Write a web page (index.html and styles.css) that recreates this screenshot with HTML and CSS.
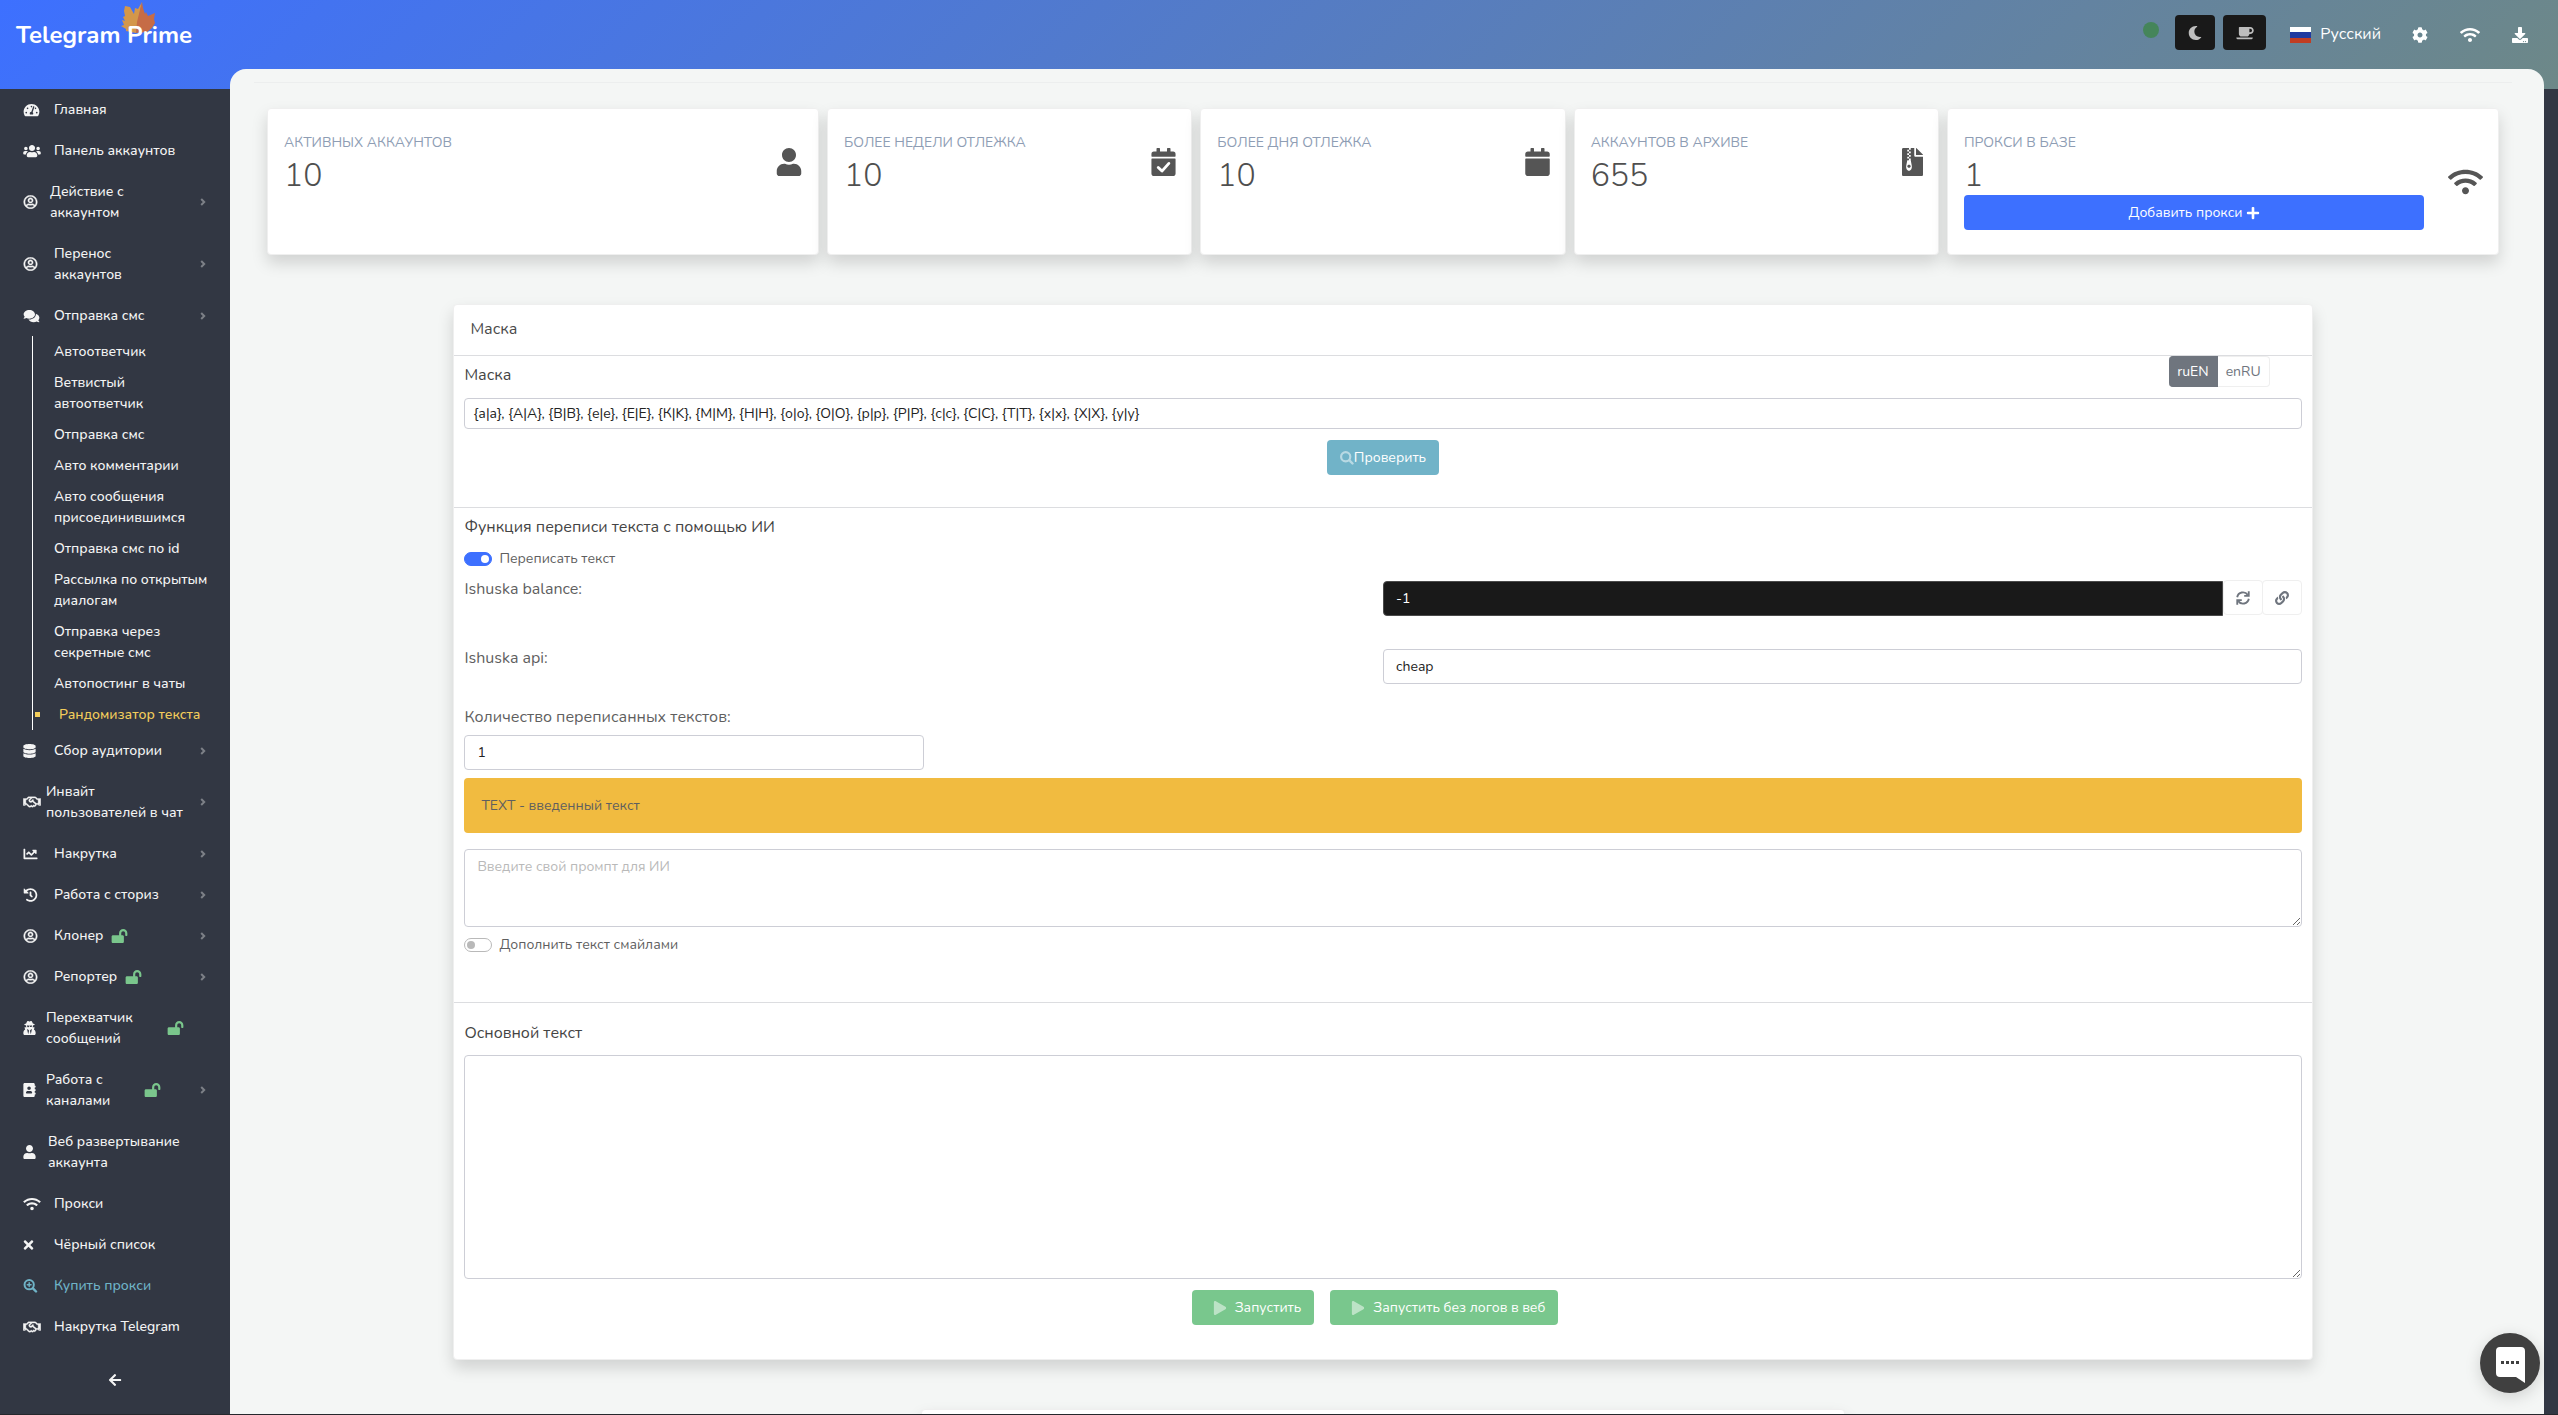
FILE: index.html
```html
<!DOCTYPE html>
<html lang="ru">
<head>
<meta charset="utf-8">
<meta name="viewport" content="width=device-width, initial-scale=1">
<title>Telegram Prime</title>
<link rel="stylesheet" href="styles.css">
</head>
<body>
<svg class="sprite" aria-hidden="true">
  <symbol id="i-dash" viewBox="0 0 576 512"><path d="M288 32C128.94 32 0 160.94 0 320c0 52.8 14.25 102.26 39.06 144.8 5.61 9.62 16.3 15.2 27.44 15.2h443c11.14 0 21.83-5.58 27.44-15.2C561.75 422.26 576 372.8 576 320c0-159.06-128.94-288-288-288zm0 64c14.71 0 26.58 10.13 30.32 23.65-1.11 2.26-2.64 4.23-3.45 6.67l-9.22 27.67c-5.13 3.49-10.97 6.01-17.64 6.01-17.67 0-32-14.33-32-32S270.33 96 288 96zM96 384c-17.67 0-32-14.33-32-32s14.33-32 32-32 32 14.33 32 32-14.33 32-32 32zm48-160c-17.67 0-32-14.33-32-32s14.33-32 32-32 32 14.33 32 32-14.33 32-32 32zm246.77-72.41l-61.33 184C343.13 347.33 352 364.54 352 384c0 11.72-3.38 22.55-8.88 32H232.88c-5.5-9.45-8.88-20.28-8.88-32 0-33.94 26.5-61.43 59.9-63.59l61.34-184.01c4.17-12.56 17.73-19.45 30.36-15.17 12.57 4.19 19.35 17.79 15.17 30.36zm14.66 57.2l15.52-46.55c3.47-1.29 7.13-2.23 11.05-2.23 17.67 0 32 14.33 32 32s-14.33 32-32 32c-11.38-.01-20.89-6.28-26.57-15.22zM480 384c-17.67 0-32-14.33-32-32s14.33-32 32-32 32 14.33 32 32-14.33 32-32 32z"/></symbol>
  <symbol id="i-users" viewBox="0 0 640 512"><path d="M96 224c35.3 0 64-28.7 64-64s-28.7-64-64-64-64 28.7-64 64 28.7 64 64 64zm448 0c35.3 0 64-28.7 64-64s-28.7-64-64-64-64 28.7-64 64 28.7 64 64 64zm32 32h-64c-17.6 0-33.5 7.1-45.1 18.6 40.3 22.1 68.9 62 75.1 109.4h66c17.7 0 32-14.3 32-32v-32c0-35.3-28.7-64-64-64zm-256 0c61.9 0 112-50.1 112-112S381.9 32 320 32 208 82.1 208 144s50.1 112 112 112zm76.8 32h-8.3c-20.8 10-43.9 16-68.5 16s-47.6-6-68.5-16h-8.3C179.6 288 128 339.6 128 403.2V432c0 26.5 21.5 48 48 48h288c26.5 0 48-21.5 48-48v-28.8c0-63.6-51.6-115.2-115.2-115.2zm-223.7-13.4C161.5 263.1 145.6 256 128 256H64c-35.3 0-64 28.7-64 64v32c0 17.7 14.3 32 32 32h65.9c6.3-47.4 34.9-87.3 75.2-109.4z"/></symbol>
  <symbol id="i-circle-user" viewBox="0 0 496 512"><path stroke="currentColor" stroke-width="14" d="M248 104c-53 0-96 43-96 96s43 96 96 96 96-43 96-96-43-96-96-96zm0 144c-26.5 0-48-21.5-48-48s21.5-48 48-48 48 21.5 48 48-21.5 48-48 48zm0-240C111 8 0 119 0 256s111 248 248 248 248-111 248-248S385 8 248 8zm0 448c-49.7 0-95.1-18.3-130.1-48.4 14.9-23 40.4-38.6 69.6-39.5 20.8 6.4 40.6 9.6 60.5 9.6s39.7-3.1 60.5-9.6c29.2 1 54.7 16.5 69.6 39.5-35 30.1-80.4 48.4-130.1 48.4zm162.7-84.1c-24.4-31.4-62.1-51.9-105.1-51.9-10.2 0-26 9.6-57.6 9.6-31.5 0-47.4-9.6-57.6-9.6-42.9 0-80.6 20.5-105.1 51.9C61.9 339.2 48 299.2 48 256c0-110.3 89.7-200 200-200s200 89.7 200 200c0 43.2-13.9 83.2-37.3 115.9z"/></symbol>
  <symbol id="i-comments" viewBox="0 0 576 512"><path d="M416 192c0-88.4-93.1-160-208-160S0 103.6 0 192c0 34.3 14.1 65.9 38 92-13.4 30.2-35.5 54.2-35.8 54.5-2.2 2.3-2.8 5.7-1.5 8.7S4.8 352 8 352c36.6 0 66.9-12.3 88.7-25 32.2 15.7 70.3 25 111.3 25 114.9 0 208-71.6 208-160zm122 220c23.9-26 38-57.7 38-92 0-66.9-53.5-124.2-129.3-148.1.9 6.6 1.3 13.3 1.3 20.1 0 105.9-107.7 192-240 192-10.8 0-21.3-.8-31.7-1.9C207.8 439.6 281.8 480 368 480c41 0 79.1-9.2 111.3-25 21.8 12.7 52.1 25 88.7 25 3.2 0 6.1-1.9 7.3-4.8 1.3-2.9.7-6.3-1.5-8.7-.3-.3-22.4-24.2-35.8-54.5z"/></symbol>
  <symbol id="i-chevron" viewBox="0 0 6 8"><path fill="none" stroke="currentColor" stroke-width="2" d="M1.2 1L4.2 4L1.2 7"/></symbol>
  <symbol id="i-database" viewBox="0 0 448 512"><path d="M448 73.143v45.714C448 159.143 347.667 192 224 192S0 159.143 0 118.857V73.143C0 32.857 100.333 0 224 0s224 32.857 224 73.143zM448 176v102.857C448 319.143 347.667 352 224 352S0 319.143 0 278.857V176c48.125 33.143 136.208 48.572 224 48.572S399.874 209.143 448 176zm0 160v102.857C448 479.143 347.667 512 224 512S0 479.143 0 438.857V336c48.125 33.143 136.208 48.572 224 48.572S399.874 369.143 448 336z"/></symbol>
  <symbol id="i-handshake" viewBox="0 0 640 512"><path stroke="currentColor" stroke-width="12" d="M519.2 127.9l-47.6-47.6A56.252 56.252 0 0 0 432 64H205.2c-14.8 0-29.1 5.9-39.6 16.3L118 127.9H0v255.7h64c17.6 0 31.8-14.2 31.9-31.7h9.1l84.6 76.4c30.9 25.1 73.8 25.7 105.6 3.8 12.5 10.8 26 15.9 41.1 15.9 18.2 0 35.3-7.4 48.8-24 22.1 8.7 48.2 2.6 64-16.8l26.2-32.3c5.6-6.9 9.1-14.8 10.9-23h57.9c.1 17.5 14.4 31.7 31.9 31.7h64V127.9H519.2zM48 351.6c-8.8 0-16-7.2-16-16s7.2-16 16-16 16 7.2 16 16c0 8.9-7.2 16-16 16zm390-6.9l-26.1 32.2c-2.8 3.4-7.8 4-11.3 1.2l-23.9-19.4-30 36.5c-6 7.3-15 4.8-18 2.4l-36.8-31.5-15.6 19.2c-13.9 17.1-39.2 19.7-55.3 6.6l-97.3-88H96V175.8h41.9l61.7-61.6c2-.8 3.7-1.5 5.7-2.3H262l-38.7 35.5c-29.4 26.9-31.1 72.3-4.4 101.3 14.8 16.2 61.2 41.2 101.5 4.4l8.2-7.5 108.2 87.8c3.4 2.8 3.9 7.9 1.2 11.3zm106-40.8h-69.2c-2.3-2.8-4.9-5.4-7.7-7.7l-102.7-83.4 12.5-11.4c6.5-6 7-16.1 1-22.6L367 167.1c-6-6.5-16.1-6.9-22.6-1l-55.2 50.6c-9.5 8.7-25.7 9.4-34.6 0-9.3-9.9-8.5-25.1 1.2-33.9l65.6-60.2c7.4-6.8 17-10.5 27-10.5l83.7-.2c2.1 0 4.1.8 5.5 2.3l61.7 61.6H544v128zm48 47.7c-8.8 0-16-7.2-16-16s7.2-16 16-16 16 7.2 16 16c0 8.9-7.2 16-16 16z"/></symbol>
  <symbol id="i-chart" viewBox="0 0 512 512"><path d="M496 384H64V80c0-8.84-7.16-16-16-16H16C7.16 64 0 71.16 0 80v336c0 17.67 14.33 32 32 32h464c8.84 0 16-7.16 16-16v-32c0-8.84-7.16-16-16-16zM464 96H345.94c-21.38 0-32.09 25.85-16.97 40.97l32.4 32.4L288 242.75l-73.37-73.37c-12.5-12.5-32.76-12.5-45.25 0l-68.69 68.69c-6.25 6.25-6.25 16.38 0 22.63l22.62 22.62c6.25 6.25 16.38 6.25 22.63 0L192 237.25l73.37 73.37c12.5 12.5 32.76 12.5 45.25 0l96-96 32.4 32.4c15.12 15.12 40.97 4.41 40.97-16.97V112c.01-8.84-7.15-16-15.99-16z"/></symbol>
  <symbol id="i-history" viewBox="0 0 512 512"><path d="M504 255.531c.253 136.64-111.18 248.372-247.82 248.468-59.015.042-113.223-20.53-155.822-54.911-11.077-8.94-11.905-25.541-1.839-35.607l11.267-11.267c8.609-8.609 22.353-9.551 31.891-1.984C173.062 425.135 212.781 440 256 440c101.705 0 184-82.311 184-184 0-101.705-82.311-184-184-184-48.814 0-93.149 18.969-126.068 49.932l50.754 50.754c10.08 10.08 2.941 27.314-11.313 27.314H24c-8.837 0-16-7.163-16-16V38.627c0-14.254 17.234-21.393 27.314-11.314l49.372 49.372C129.209 34.136 189.552 8 256 8c136.81 0 247.747 110.78 248 247.531zm-180.912 78.784l9.823-12.63c8.138-10.463 6.253-25.542-4.21-33.679L288 256.349V152c0-13.255-10.745-24-24-24h-16c-13.255 0-24 10.745-24 24v135.651l65.409 50.874c10.463 8.137 25.541 6.253 33.679-4.21z"/></symbol>
  <symbol id="i-unlock" viewBox="0 0 576 512"><path d="M423.5 0C339.5.3 272 69.5 272 153.5V224H48c-26.5 0-48 21.5-48 48v192c0 26.5 21.5 48 48 48h352c26.5 0 48-21.5 48-48V272c0-26.5-21.5-48-48-48h-48v-71.1c0-39.6 31.7-72.5 71.3-72.9 40-.4 72.7 32.1 72.7 72v80c0 13.3 10.7 24 24 24h32c13.3 0 24-10.7 24-24v-80C576 68 507.5-.3 423.5 0z"/></symbol>
  <symbol id="i-secret" viewBox="0 0 448 512"><path d="M383.9 308.3l23.9-62.6c4-10.5-3.7-21.7-15-21.7h-58.5c11-18.9 17.8-40.6 17.8-64v-.3c39.2-7.8 64-19.1 64-31.7 0-13.3-27.3-25.1-70.1-33-9.2-32.8-27-65.8-40.6-82.8-9.5-11.9-25.9-15.6-39.5-8.8l-27.6 13.8c-9 4.5-19.6 4.5-28.6 0L182.1 3.4c-13.6-6.8-30-3.1-39.5 8.8-13.5 17-31.4 50-40.6 82.8-42.7 7.9-70 19.7-70 33 0 12.6 24.8 23.9 64 31.7v.3c0 23.4 6.8 45.1 17.8 64H56.3c-11.5 0-19.2 11.7-14.7 22.3l25.8 60.2C27.3 329.8 0 372.7 0 422.4v44.8C0 491.9 20.1 512 44.8 512h358.4c24.7 0 44.8-20.1 44.8-44.8v-44.8c0-48.4-25.8-90.4-64.1-114.1zM176 480l-41.6-192 49.6 32 24 40-32 120zm96 0l-32-120 24-40 49.6-32L272 480zm41.7-298.5c-3.9 11.9-7 24.6-16.5 33.4-10.1 9.3-48 22.4-64-25-2.8-8.4-15.4-8.4-18.3 0-17 50.2-56 32.4-64 25-9.5-8.8-12.7-21.5-16.5-33.4-.8-2.5-6.3-5.7-6.3-5.8v-10.8c28.3 3.6 61 5.8 96 5.8s67.7-2.1 96-5.8v10.8c-.1.1-5.6 3.2-6.4 5.8z"/></symbol>
  <symbol id="i-book" viewBox="0 0 448 512"><path d="M436 160c6.6 0 12-5.4 12-12v-40c0-6.6-5.4-12-12-12h-20V48c0-26.5-21.5-48-48-48H48C21.5 0 0 21.5 0 48v416c0 26.5 21.5 48 48 48h320c26.5 0 48-21.5 48-48v-48h20c6.6 0 12-5.4 12-12v-40c0-6.6-5.4-12-12-12h-20v-64h20c6.6 0 12-5.4 12-12v-40c0-6.6-5.4-12-12-12h-20v-64h20zm-228-32c35.3 0 64 28.7 64 64s-28.7 64-64 64-64-28.7-64-64 28.7-64 64-64zm112 236.8c0 10.6-10 19.2-22.4 19.2H118.4C106 384 96 375.4 96 364.8v-19.2c0-31.8 30.1-57.6 67.2-57.6h5c12.3 5.1 25.7 8 39.8 8s27.6-2.9 39.8-8h5c37.1 0 67.2 25.8 67.2 57.6v19.2z"/></symbol>
  <symbol id="i-user" viewBox="0 0 448 512"><path d="M224 256c70.7 0 128-57.3 128-128S294.7 0 224 0 96 57.3 96 128s57.3 128 128 128zm89.6 32h-16.7c-22.2 10.2-46.9 16-72.9 16s-50.6-5.8-72.9-16h-16.7C60.2 288 0 348.2 0 422.4V464c0 26.5 21.5 48 48 48h352c26.5 0 48-21.5 48-48v-41.6c0-74.2-60.2-134.4-134.4-134.4z"/></symbol>
  <symbol id="i-wifi" viewBox="0 0 640 512"><path d="M634.91 154.88C457.74-8.99 182.19-8.93 5.09 154.88c-6.66 6.16-6.79 16.59-.35 22.98l34.24 33.97c6.14 6.1 16.02 6.23 22.4.38 145.92-133.68 371.3-133.71 517.25 0 6.38 5.85 16.26 5.71 22.4-.38l34.24-33.97c6.43-6.39 6.3-16.82-.36-22.98zM320 352c-35.35 0-64 28.65-64 64s28.65 64 64 64 64-28.65 64-64-28.65-64-64-64zm202.67-83.59c-115.26-101.93-290.21-101.82-405.34 0-6.9 6.1-7.12 16.69-.57 23.15l34.44 33.99c6 5.92 15.66 6.32 22.05.8 83.95-72.57 209.74-72.41 293.49 0 6.39 5.52 16.05 5.13 22.05-.8l34.44-33.99c6.56-6.46 6.33-17.06-.56-23.15z"/></symbol>
  <symbol id="i-times" viewBox="0 0 352 512"><path d="M242.72 256l100.07-100.07c12.28-12.28 12.28-32.19 0-44.48l-22.24-22.24c-12.28-12.28-32.19-12.28-44.48 0L176 189.28 75.93 89.21c-12.28-12.28-32.19-12.28-44.48 0L9.21 111.45c-12.28 12.28-12.28 32.19 0 44.48L109.28 256 9.21 356.07c-12.28 12.28-12.28 32.19 0 44.48l22.24 22.24c12.28 12.28 32.2 12.28 44.48 0L176 322.72l100.07 100.07c12.28 12.28 32.2 12.28 44.48 0l22.24-22.24c12.28-12.28 12.28-32.19 0-44.48L242.72 256z"/></symbol>
  <symbol id="i-zoom-in" viewBox="0 0 512 512"><g fill="none" stroke="currentColor" stroke-width="72"><circle cx="208" cy="208" r="170"/><path stroke-width="90" stroke-linecap="round" d="M345 345l112 112"/><path stroke-width="52" stroke-linecap="round" d="M138 208h140M208 138v140"/></g></symbol>
  <symbol id="i-search" viewBox="0 0 512 512"><g fill="none" stroke="currentColor" stroke-width="80"><circle cx="208" cy="208" r="168"/><path stroke-width="90" stroke-linecap="round" d="M345 345l112 112"/></g></symbol>
  <symbol id="i-arrow-left" viewBox="0 0 448 512"><path d="M257.5 445.1l-22.2 22.2c-9.4 9.4-24.6 9.4-33.9 0L7 273c-9.4-9.4-9.4-24.6 0-33.9L201.4 44.7c9.4-9.4 24.6-9.4 33.9 0l22.2 22.2c9.5 9.5 9.3 25-.4 34.3L136.6 216H424c13.3 0 24 10.7 24 24v32c0 13.3-10.7 24-24 24H136.6l120.5 114.8c9.8 9.3 10 24.8.4 34.3z"/></symbol>
  <symbol id="i-cog" viewBox="0 0 512 512"><path d="M487.4 315.7l-42.6-24.6c4.3-23.2 4.3-47 0-70.2l42.6-24.6c4.9-2.8 7.1-8.6 5.5-14-11.1-35.6-30-67.8-54.7-94.6-3.8-4.1-10-5.1-14.8-2.3L380.8 110c-17.9-15.4-38.5-27.3-60.8-35.1V25.8c0-5.6-3.9-10.5-9.4-11.7-36.7-8.2-74.3-7.8-109.2 0-5.5 1.2-9.4 6.1-9.4 11.7V75c-22.2 7.9-42.8 19.8-60.8 35.1L88.7 85.5c-4.9-2.8-11-1.9-14.8 2.3-24.7 26.7-43.6 58.9-54.7 94.6-1.7 5.4.6 11.2 5.5 14L67.3 221c-4.3 23.2-4.3 47 0 70.2l-42.6 24.6c-4.9 2.8-7.1 8.6-5.5 14 11.1 35.6 30 67.8 54.7 94.6 3.8 4.1 10 5.1 14.8 2.3l42.6-24.6c17.9 15.4 38.5 27.3 60.8 35.1v49.2c0 5.6 3.9 10.5 9.4 11.7 36.7 8.2 74.3 7.8 109.2 0 5.5-1.2 9.4-6.1 9.4-11.7v-49.2c22.2-7.9 42.8-19.8 60.8-35.1l42.6 24.6c4.9 2.8 11 1.9 14.8-2.3 24.7-26.7 43.6-58.9 54.7-94.6 1.5-5.5-.7-11.3-5.6-14.1zM256 336c-44.1 0-80-35.9-80-80s35.9-80 80-80 80 35.9 80 80-35.9 80-80 80z"/></symbol>
  <symbol id="i-download" viewBox="0 0 512 512"><path d="M216 0h80c13.3 0 24 10.7 24 24v168h87.7c17.8 0 26.7 21.5 14.1 34.1L269.7 378.3c-7.5 7.5-19.8 7.5-27.3 0L90.1 226.1c-12.6-12.6-3.7-34.1 14.1-34.1H192V24c0-13.3 10.7-24 24-24zm296 376v112c0 13.3-10.7 24-24 24H24c-13.3 0-24-10.7-24-24V376c0-13.3 10.7-24 24-24h146.7l49 49c20.1 20.1 52.5 20.1 72.6 0l49-49H488c13.3 0 24 10.7 24 24zm-124 88c0-11-9-20-20-20s-20 9-20 20 9 20 20 20 20-9 20-20zm64 0c0-11-9-20-20-20s-20 9-20 20 9 20 20 20 20-9 20-20z"/></symbol>
  <symbol id="i-moon" viewBox="0 0 512 512"><path d="M283.211 512c78.962 0 151.079-35.925 198.857-94.792 7.068-8.708-.639-21.43-11.562-19.35-124.203 23.654-238.262-71.576-238.262-196.954 0-72.222 38.662-138.635 101.498-174.394 9.686-5.512 7.25-20.197-3.756-22.23A258.156 258.156 0 0 0 283.211 0c-141.309 0-256 114.511-256 256 0 141.309 114.511 256 256 256z"/></symbol>
  <symbol id="i-coffee" viewBox="0 0 640 512"><path d="M192 384h192c53 0 96-43 96-96h32c70.6 0 128-57.4 128-128S582.6 32 512 32H120c-13.3 0-24 10.7-24 24v232c0 53 43 96 96 96zM512 96c35.3 0 64 28.7 64 64s-28.7 64-64 64h-32V96h32zm47.7 384H48.3c-47.6 0-61-64-36-64h583.3c25 0 11.8 64-35.9 64z"/></symbol>
  <symbol id="i-plus" viewBox="0 0 448 512"><path d="M416 208H272V64c0-17.67-14.33-32-32-32h-32c-17.67 0-32 14.33-32 32v144H32c-17.67 0-32 14.33-32 32v32c0 17.67 14.33 32 32 32h144v144c0 17.67 14.33 32 32 32h32c17.67 0 32-14.33 32-32V304h144c17.67 0 32-14.33 32-32v-32c0-17.67-14.33-32-32-32z"/></symbol>
  <symbol id="i-calendar" viewBox="0 0 448 512"><path d="M12 192h424c6.6 0 12 5.4 12 12v260c0 26.5-21.5 48-48 48H48c-26.5 0-48-21.5-48-48V204c0-6.6 5.4-12 12-12zm436-44v-36c0-26.5-21.5-48-48-48h-48V12c0-6.6-5.4-12-12-12h-40c-6.6 0-12 5.4-12 12v52H160V12c0-6.6-5.4-12-12-12h-40c-6.6 0-12 5.4-12 12v52H48C21.5 64 0 85.5 0 112v36c0 6.6 5.4 12 12 12h424c6.6 0 12-5.4 12-12z"/></symbol>
  <symbol id="i-archive" viewBox="0 0 384 512"><path fill-rule="evenodd" d="M24 0h104v32h32V0h64v136c0 13 11 24 24 24h136v328c0 13-11 24-24 24H24c-13 0-24-11-24-24V24C0 11 11 0 24 0zM256 0q6 0 10 4l111 111q7 6 7 13H256zM96 32v32h32V32zM128 64v32h32V64zM96 96v32h32V96zM128 128v32h32v-32zM96 160v32h32v-32zM128 192v32H97l-19 96c-10 50 14 96 50 96s60-46 50-96l-18-96v-32zM128 304c18 0 32 12 32 28s-14 28-32 28-32-12-32-28 14-28 32-28z"/></symbol>
  <symbol id="i-sync" viewBox="0 0 512 512"><g fill="none" stroke="currentColor" stroke-width="68"><path d="M44 228A214 214 0 0 1 430 142M468 284A214 214 0 0 1 82 370"/><path d="M466 12v166H300M46 500V334h166"/></g></symbol>
  <symbol id="i-link" viewBox="0 0 512 512"><path d="M326.612 185.391c59.747 59.809 58.927 155.698.36 214.59-.11.12-.24.25-.36.37l-67.2 67.2c-59.27 59.27-155.699 59.262-214.96 0-59.27-59.26-59.27-155.7 0-214.96l37.106-37.106c9.84-9.84 26.786-3.3 27.294 10.606.648 17.722 3.826 35.527 9.69 52.721 1.986 5.822.567 12.262-3.783 16.612l-13.087 13.087c-28.026 28.026-28.905 73.66-1.155 101.96 28.024 28.579 74.086 28.749 102.325.51l67.2-67.19c28.191-28.191 28.073-73.757 0-101.83-3.701-3.694-7.429-6.564-10.341-8.569a16.037 16.037 0 0 1-6.947-12.606c-.396-10.567 3.348-21.456 11.698-29.806l21.054-21.055c5.521-5.521 14.182-6.199 20.584-1.731a152.482 152.482 0 0 1 20.522 17.197zM467.547 44.449c-59.261-59.262-155.69-59.27-214.96 0l-67.2 67.2c-.12.12-.25.25-.36.37-58.566 58.892-59.387 154.781.36 214.59a152.454 152.454 0 0 0 20.521 17.196c6.402 4.468 15.064 3.789 20.584-1.731l21.054-21.055c8.35-8.35 12.094-19.239 11.698-29.806a16.037 16.037 0 0 0-6.947-12.606c-2.912-2.005-6.64-4.875-10.341-8.569-28.073-28.073-28.191-73.639 0-101.83l67.2-67.19c28.239-28.239 74.3-28.069 102.325.51 27.75 28.3 26.872 73.934-1.155 101.96l-13.087 13.087c-4.35 4.35-5.769 10.79-3.783 16.612 5.864 17.194 9.042 34.999 9.69 52.721.509 13.906 17.454 20.446 27.294 10.606l37.106-37.106c59.271-59.259 59.271-155.699.001-214.959z"/></symbol>
  <symbol id="i-play" viewBox="0 0 448 512"><path d="M424.4 214.7L72.4 6.6C43.8-10.3 0 6.1 0 47.9V464c0 37.5 40.7 60.1 72.4 41.3l352-208c31.4-18.5 31.5-64.1 0-82.6z"/></symbol>
</svg>

<header class="topbar">
  <a class="logo" href="#">
    <svg class="logo-leaf" viewBox="0 0 34 32" aria-hidden="true"><path fill="#d4974a" d="M21 0L17 7 14 6 13 12 9 5 4 4 3 9 4 14 2 15 4 19 1 18 3 23 0 24 5 27 5 29 15 31 16 24z"/><path fill="#c66c46" d="M21 0L22 6 24 12 25 10 27 14 34 11 33 17 34 21 31 26 26 30 15 31 16 20z"/></svg>
    <span class="logo-text">Telegram Prime</span>
  </a>
  <div class="topbar-tools">
    <span class="status" title="online"></span>
    <button class="btn-dark" type="button" aria-label="Тёмная тема"><svg class="ico-14"><use href="#i-moon"/></svg></button>
    <button class="btn-dark btn-dark--wide" type="button" aria-label="Пауза"><svg class="ico-14"><use href="#i-coffee"/></svg></button>
    <a class="lang" href="#"><svg class="flag" viewBox="0 0 21 16"><path fill="#fff" d="M0 0h21v5H0z"/><path fill="#203aa0" d="M0 5h21v6H0z"/><path fill="#c13d22" d="M0 11h21v5H0z"/></svg>Русский</a>
    <a class="tool" href="#" aria-label="Настройки"><svg><use href="#i-cog"/></svg></a>
    <a class="tool tool--wide" href="#" aria-label="Прокси"><svg><use href="#i-wifi"/></svg></a>
    <a class="tool" href="#" aria-label="Обновление"><svg><use href="#i-download"/></svg></a>
  </div>
</header>

<div class="layout">
  <nav class="sidebar">
    <ul class="menu">
      <li><a class="item" href="#"><svg class="item-ico w-dash"><use href="#i-dash"/></svg><span>Главная</span></a></li>
      <li><a class="item" href="#"><svg class="item-ico w-wide"><use href="#i-users"/></svg><span>Панель аккаунтов</span></a></li>
      <li><a class="item item--mid" href="#"><svg class="item-ico"><use href="#i-circle-user"/></svg><span>Действие с<br>аккаунтом</span><svg class="chev"><use href="#i-chevron"/></svg></a></li>
      <li><a class="item" href="#"><svg class="item-ico"><use href="#i-circle-user"/></svg><span>Перенос<br>аккаунтов</span><svg class="chev"><use href="#i-chevron"/></svg></a></li>
      <li><a class="item" href="#"><svg class="item-ico w-dash"><use href="#i-comments"/></svg><span>Отправка смс</span><svg class="chev"><use href="#i-chevron"/></svg></a>
        <ul class="submenu">
          <li><a href="#">Автоответчик</a></li>
          <li><a href="#">Ветвистый<br>автоответчик</a></li>
          <li><a href="#">Отправка смс</a></li>
          <li><a href="#">Авто комментарии</a></li>
          <li><a href="#">Авто сообщения присоединившимся</a></li>
          <li><a href="#">Отправка смс по id</a></li>
          <li><a href="#">Рассылка по открытым<br>диалогам</a></li>
          <li><a href="#">Отправка через<br>секретные смс</a></li>
          <li><a href="#">Автопостинг в чаты</a></li>
          <li><a class="current" href="#">Рандомизатор текста</a></li>
        </ul>
      </li>
      <li><a class="item" href="#"><svg class="item-ico w-narrow"><use href="#i-database"/></svg><span>Сбор аудитории</span><svg class="chev"><use href="#i-chevron"/></svg></a></li>
      <li><a class="item item--tight" href="#"><svg class="item-ico w-wide"><use href="#i-handshake"/></svg><span>Инвайт<br>пользователей в чат</span><svg class="chev"><use href="#i-chevron"/></svg></a></li>
      <li><a class="item" href="#"><svg class="item-ico"><use href="#i-chart"/></svg><span>Накрутка</span><svg class="chev"><use href="#i-chevron"/></svg></a></li>
      <li><a class="item" href="#"><svg class="item-ico"><use href="#i-history"/></svg><span>Работа с сториз</span><svg class="chev"><use href="#i-chevron"/></svg></a></li>
      <li><a class="item" href="#"><svg class="item-ico"><use href="#i-circle-user"/></svg><span>Клонер</span><svg class="lock"><use href="#i-unlock"/></svg><svg class="chev"><use href="#i-chevron"/></svg></a></li>
      <li><a class="item" href="#"><svg class="item-ico"><use href="#i-circle-user"/></svg><span>Репортер</span><svg class="lock"><use href="#i-unlock"/></svg><svg class="chev"><use href="#i-chevron"/></svg></a></li>
      <li><a class="item item--tight item--lockend" href="#"><svg class="item-ico w-narrow"><use href="#i-secret"/></svg><span>Перехватчик<br>сообщений</span><svg class="lock"><use href="#i-unlock"/></svg></a></li>
      <li><a class="item item--tight item--lockend" href="#"><svg class="item-ico w-narrow"><use href="#i-book"/></svg><span>Работа с<br>каналами</span><svg class="lock"><use href="#i-unlock"/></svg><svg class="chev"><use href="#i-chevron"/></svg></a></li>
      <li><a class="item item--mid" href="#"><svg class="item-ico w-narrow"><use href="#i-user"/></svg><span>Веб развертывание<br>аккаунта</span></a></li>
      <li><a class="item" href="#"><svg class="item-ico w-wide"><use href="#i-wifi"/></svg><span>Прокси</span></a></li>
      <li><a class="item" href="#"><svg class="item-ico w-times"><use href="#i-times"/></svg><span>Чёрный список</span></a></li>
      <li><a class="item item--info" href="#"><svg class="item-ico"><use href="#i-zoom-in"/></svg><span>Купить прокси</span></a></li>
      <li><a class="item" href="#"><svg class="item-ico w-wide"><use href="#i-handshake"/></svg><span>Накрутка Telegram</span></a></li>
    </ul>
    <button class="collapse" type="button" aria-label="Свернуть меню"><svg class="ico-14"><use href="#i-arrow-left"/></svg></button>
  </nav>

  <main class="content">
    <hr class="content-rule">
    <section class="stats">
      <div class="card stat"><div class="stat-body"><div class="stat-title">АКТИВНЫХ АККАУНТОВ</div><div class="stat-value">10</div></div><svg class="stat-ico"><use href="#i-user"/></svg></div>
      <div class="card stat"><div class="stat-body"><div class="stat-title">БОЛЕЕ НЕДЕЛИ ОТЛЕЖКА</div><div class="stat-value">10</div></div><svg class="stat-ico stat-ico--cal" viewBox="0 0 448 512"><use href="#i-calendar"/><path fill="none" stroke="#fff" stroke-width="52" stroke-linecap="round" stroke-linejoin="round" d="M128 356l68 66 126-140"/></svg></div>
      <div class="card stat"><div class="stat-body"><div class="stat-title">БОЛЕЕ ДНЯ ОТЛЕЖКА</div><div class="stat-value">10</div></div><svg class="stat-ico stat-ico--cal"><use href="#i-calendar"/></svg></div>
      <div class="card stat"><div class="stat-body"><div class="stat-title">АККАУНТОВ В АРХИВЕ</div><div class="stat-value">655</div></div><svg class="stat-ico stat-ico--file"><use href="#i-archive"/></svg></div>
      <div class="card stat"><div class="stat-body"><div class="stat-title">ПРОКСИ В БАЗЕ</div><div class="stat-value">1</div><button class="btn btn-primary" type="button">Добавить прокси <svg class="ico-14"><use href="#i-plus"/></svg></button></div><svg class="stat-ico stat-ico--wifi"><use href="#i-wifi"/></svg></div>
    </section>

    <form class="card form">
      <h1 class="form-head">Маска</h1>
      <section class="section section--mask">
        <div class="mask-head">
          <label class="title" for="mask">Маска</label>
          <div class="toggle"><button class="is-on" type="button">ruEN</button><button type="button">enRU</button></div>
        </div>
        <input class="field field--sm" id="mask" type="text" value="{а|a}, {А|A}, {В|B}, {е|e}, {Е|E}, {К|K}, {М|M}, {Н|H}, {о|o}, {О|O}, {р|p}, {Р|P}, {с|c}, {С|C}, {Т|T}, {х|x}, {Х|X}, {у|y}">
        <div class="actions"><button class="btn btn-info" type="button"><svg class="ico-14"><use href="#i-search"/></svg>Проверить</button></div>
      </section>
      <section class="section section--ai">
        <h2 class="title">Функция переписи текста с помощью ИИ</h2>
        <label class="switch"><input type="checkbox" checked>Переписать текст</label>
        <div class="pair">
          <label class="label" for="balance">Ishuska balance:</label>
          <div class="group">
            <input class="field field--dark" id="balance" type="text" value="-1" readonly>
            <button class="btn-outline" type="button" aria-label="Обновить"><svg class="ico-14"><use href="#i-sync"/></svg></button>
            <button class="btn-outline" type="button" aria-label="Ссылка"><svg class="ico-14"><use href="#i-link"/></svg></button>
          </div>
        </div>
        <div class="pair">
          <label class="label" for="api">Ishuska api:</label>
          <input class="field" id="api" type="text" value="cheap">
        </div>
        <div class="count">
          <label class="label" for="count">Количество переписанных текстов:</label>
          <input class="field" id="count" type="text" value="1">
        </div>
        <div class="alert">TEXT - введенный текст</div>
        <textarea class="field area-sm" placeholder="Введите свой промпт для ИИ" aria-label="Промпт"></textarea>
        <label class="switch"><input type="checkbox">Дополнить текст смайлами</label>
      </section>
      <section class="section section--text">
        <label class="title" for="text">Основной текст</label>
        <textarea class="field area-lg" id="text"></textarea>
        <div class="actions actions--run">
          <button class="btn btn-success" type="button"><svg class="ico-14"><use href="#i-play"/></svg>Запустить</button>
          <button class="btn btn-success" type="button"><svg class="ico-14"><use href="#i-play"/></svg>Запустить без логов в веб</button>
        </div>
      </section>
    </form>

    <section class="card next"></section>
  </main>
</div>

<button class="chat" type="button" aria-label="Чат"><svg viewBox="0 0 60 60"><path fill="#fff" d="M20 14h21q4 0 4 4v32l-9-6H20q-4 0-4-4V18q0-4 4-4z"/><path fill="#404040" d="M21 28h3v3h-3zM26 28h3v3h-3zM31 28h3v3h-3zM36 28h3v3h-3z"/></svg></button>
</body>
</html>
```
FILE: styles.css
```css
*, *::before, *::after { box-sizing: border-box; }

html { height: 100%; }

body {
  margin: 0;
  height: 100vh;
  display: flex;
  flex-direction: column;
  overflow: hidden;
  border-bottom: 1px solid #25272c;
  background: linear-gradient(135deg, #3d70ff, #6d8888) 0 0 / 100% 89px no-repeat #323743;
  color: #5f5f5f;
  font: 400 14px/21px Nunito, "Noto Sans", sans-serif;
}

ul { list-style: none; margin: 0; padding: 0; }
a { color: inherit; text-decoration: none; }
button, input, textarea { font: inherit; color: inherit; }
button { padding: 0; border: 0; cursor: pointer; }
svg { fill: currentColor; flex-shrink: 0; }
.sprite { position: absolute; width: 0; height: 0; }
.ico-14 { width: 14px; height: 14px; }

/* top bar */
.topbar {
  flex: 0 0 69px;
  display: flex;
  justify-content: space-between;
  padding: 0 30px 0 16px;
  color: #fff;
}
.logo { position: relative; height: 69px; }
.logo-text {
  position: relative;
  font-size: 24px;
  line-height: 70px;
  font-weight: 700;
}
.logo-leaf { position: absolute; left: 105px; top: 2px; width: 34px; height: 32px; }
.topbar-tools { display: flex; align-items: center; height: 69px; }
.status { width: 16px; height: 16px; margin: -10px 16px 0 0; border-radius: 50%; background: #45855a; }
.btn-dark {
  display: flex;
  align-items: center;
  justify-content: center;
  width: 40px;
  height: 35px;
  margin: -4px 8px 0 0;
  border-radius: 4px;
  background: #191919;
  color: #bdbdbd;
}
.btn-dark--wide { width: 43px; margin-right: 24px; }
.btn-dark--wide svg { width: 18px; }
.lang { display: flex; align-items: center; gap: 9px; font-size: 16px; margin-right: 15px; }
.flag { width: 21px; height: 16px; }
.tool { display: flex; margin-left: 16px; padding-right: 16px; }
.tool:last-child { padding-right: 0; }
.tool svg { width: 16px; height: 16px; }
.tool--wide svg { width: 20px; }

/* side menu */
.layout { flex: 1; display: flex; min-height: 0; padding-right: 14px; }
.sidebar {
  flex: 0 0 230px;
  display: flex;
  flex-direction: column;
  margin-top: 20px;
  background: #323743;
  color: #f4f4f4;
  font-weight: 500;
}
.item {
  display: flex;
  align-items: center;
  padding: 10px 24px 10px 23px;
}
.item-ico { width: 15px; height: 14px; margin-right: 16px; }
.w-dash { width: 17px; margin-right: 14px; }
.w-wide { width: 18px; margin-right: 13px; }
.w-narrow { width: 13px; margin-right: 18px; }
.w-times { width: 11px; margin-right: 20px; }
.item--mid .item-ico { margin-right: 12px; }
.item--tight .item-ico { margin-right: 10px; }
.item--tight .w-wide { margin-right: 5px; }
.chev { width: 6px; height: 8px; margin-left: auto; color: #7d8087; }
.lock { width: 17px; height: 14px; margin-left: 8px; color: #7ac68c; }
.item--lockend .lock { margin: 0 22px 0 auto; }
.item--lockend .chev { margin-left: 17px; }
.item--info { color: #6fb3c7; }
.submenu { margin-left: 32px; border-left: 1px solid #fff; }
.submenu a { display: block; padding: 5px 20px 5px 21px; }
.submenu .current { display: flex; align-items: center; gap: 19px; padding: 5px 0 5px 2px; color: #f3cd5b; }
.current::before { content: ""; width: 5px; height: 5px; background: currentColor; }
.collapse {
  display: flex;
  justify-content: center;
  padding: 26px 0;
  background: none;
}

/* content area */
.content {
  flex: 1;
  min-width: 0;
  overflow: hidden;
  padding: 13px 41px 0 33px;
  border-radius: 16px 16px 0 0;
  background: #f4f6f5;
}
.content-rule { height: 1px; margin: 0 -9px 25px; border: 0; background: #eceeee; }
.card {
  border: 1px solid #efefef;
  border-radius: 4px;
  background: #fff;
  box-shadow: 0 8px 16px rgba(0, 0, 0, .15);
}

/* statistics */
.stats { display: grid; grid-template-columns: 3fr 2fr 2fr 2fr 3fr; margin-bottom: 49px; }
.stat {
  display: flex;
  align-items: flex-start;
  gap: 24px;
  min-height: 147px;
  margin: 0 4px;
  padding: 23px 15px 23px 16px;
}
.stat-body { flex: 1; display: flex; flex-direction: column; }
.stat-title { color: #8e9db4; }
.stat-value { height: 42px; font-size: 32px; line-height: 45px; font-weight: 300; color: #4f4f4f; }
.stat-ico { width: 28px; height: 28px; margin: 16px 0; color: #555; }
.stat-ico--cal { width: 25px; }
.stat-ico--file { width: 21px; }
.stat-ico--wifi { width: 35px; align-self: center; margin: 0; }

.btn {
  display: flex;
  align-items: center;
  justify-content: center;
  height: 35px;
  padding: 0 13px;
  border-radius: 4px;
  color: #fff;
}
.btn-primary { gap: 3px; background: #3d70ff; }
.btn-info { background: #71b3c8; }
.btn-success { gap: 8px; padding-left: 21px; background: #79c78d; }
.btn-info svg, .btn-success svg { opacity: .5; }

/* form */
.form { width: 83%; margin: 0 auto; }
.form-head {
  margin: 0;
  padding: 14px 16px 15px;
  border-bottom: 1px solid #dcdde0;
  color: #4a4a4a;
  font-size: 16px;
  line-height: 21px;
  font-weight: 400;
}
.section { padding: 0 10px; }
.section + .section { border-top: 1px solid #dcdde0; }
.title { margin: 0; font-size: 16px; font-weight: 400; color: #444; }
.label { font-size: 16px; }

.section--mask { padding-bottom: 32px; }
.mask-head { display: flex; justify-content: space-between; height: 42px; padding-top: 9px; }
.toggle { display: flex; margin: -9px 32px 0 0; height: 31px; }
.toggle button {
  padding: 0 8px;
  border: 1px solid #efefef;
  border-left: 0;
  border-radius: 0 4px 4px 0;
  background: #fff;
  color: #6f757e;
}
.toggle .is-on { border-color: #6f757e; border-radius: 4px 0 0 4px; background: #6f757e; color: #fff; }

.field {
  display: block;
  width: 100%;
  height: 35px;
  padding: 0 12px;
  border: 1px solid #cdced6;
  border-radius: 4px;
  background: #fff;
  color: #222;
}
.field--sm { height: 31px; padding: 0 8px; }
.field--dark { flex: 1; width: auto; margin-top: 1px; border-color: #4a4a4a; border-radius: 4px 0 0 4px; background: #191919; color: #fff; }
textarea.field { padding: 6px 12px; }
.field::placeholder { color: #b9b9b9; }

.actions { display: flex; justify-content: center; gap: 16px; margin-top: 11px; }
.actions--run { padding-right: 16px; }

.section--ai { padding-top: 9px; padding-bottom: 47px; }
.switch { display: flex; align-items: center; gap: 7px; }
.switch input {
  appearance: none;
  display: flex;
  align-items: center;
  width: 28px;
  height: 14px;
  margin: 0;
  padding: 2px;
  border: 1px solid #b9b9b9;
  border-radius: 7px;
}
.switch input::before { content: ""; width: 8px; height: 8px; border-radius: 50%; background: #b9b9b9; }
.switch input:checked { justify-content: flex-end; border-color: #3d70ff; background: #3d70ff; }
.switch input:checked::before { background: #fff; }
.section--ai .title { margin-bottom: 10px; }
.pair { display: grid; grid-template-columns: 1fr 1fr; height: 69px; padding-top: 11px; }
.pair .label { line-height: 19px; }
.group { display: flex; }
.btn-outline {
  display: flex;
  align-items: center;
  justify-content: center;
  width: 40px;
  height: 35px;
  border: 1px solid #efefef;
  border-radius: 4px;
  background: #fff;
  color: #6f757e;
}
.btn-outline + .btn-outline { margin-left: -1px; }
.count { display: flex; flex-direction: column; gap: 7px; width: 25%; margin-bottom: 8px; white-space: nowrap; }
.alert { padding: 17px; border-radius: 4px; background: #f1bb40; }
.area-sm { height: 78px; margin: 16px 0 7px; }
.section--text { padding-top: 20px; padding-bottom: 34px; }
.section--text .title { display: block; }
.area-lg { height: 224px; margin-top: 11px; }

.next { width: 924px; max-width: 50%; height: 200px; margin: 49px auto 0; }

/* chat launcher */
.chat {
  position: fixed;
  right: 18px;
  bottom: 22px;
  width: 60px;
  height: 60px;
  border-radius: 50%;
  background: #404040;
  box-shadow: 0 4px 16px rgba(0, 0, 0, .15);
}
.chat svg { display: block; width: 60px; height: 60px; }
```
